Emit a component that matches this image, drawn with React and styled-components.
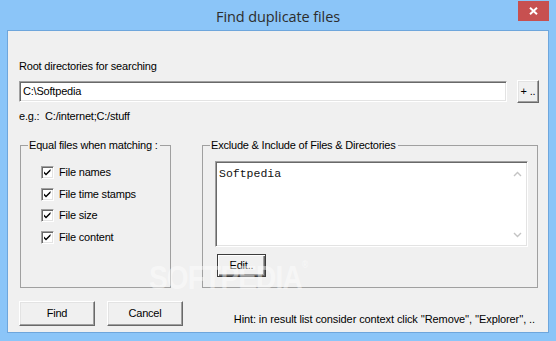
import React from "react";
import styled, { createGlobalStyle } from "styled-components";

const Global = createGlobalStyle`
  html, body { margin: 0; padding: 0; background: #8bc5f8; }
  #root { width: 556px; height: 341px; }
  * { box-sizing: border-box; }
`;

const Frame = styled.div`
  width: 556px;
  height: 341px;
  background: #8bc5f8;
  padding: 0 7px 8px 7px;
  display: flex;
  flex-direction: column;
  position: relative;
  overflow: hidden;
`;

const TitleBar = styled.div`
  height: 30px;
  display: grid;
  grid-template-columns: 1fr auto 1fr;
  align-items: start;
`;

const Title = styled.div`
  grid-column: 2;
  font-family: "Open Sans", "Noto Sans", sans-serif;
  font-size: 14.5px;
  line-height: 33px;
  color: #2d2d2d;
  letter-spacing: -0.1px;
`;

const CloseBtn = styled.div`
  grid-column: 3;
  justify-self: end;
  margin-top: 1px;
  width: 31px;
  height: 20px;
  background: #c75050;
  display: flex;
  align-items: center;
  justify-content: center;
`;

const Client = styled.div`
  flex: 1;
  background: #f0f0f0;
  border: 1px solid #6ea6dc;
  padding: 29px 9px 0 11px;
  display: flex;
  flex-direction: column;
  font-family: "Liberation Sans", Arial, sans-serif;
  font-size: 11px;
  letter-spacing: -0.2px;
  color: #000;
  position: relative;
`;

const Text = styled.div`
  line-height: 13px;
  height: 13px;
  white-space: pre;
  margin-top: ${(p) => p.$mt || 0}px;
`;

const InputRow = styled.div`
  display: flex;
  align-items: center;
  gap: 10px;
  margin-top: 7px;
  height: 23px;
`;

const Sunken = styled.div`
  background: #fff;
  border-top: 1px solid #a0a0a0;
  border-left: 1px solid #a0a0a0;
  border-right: 1px solid #fff;
  border-bottom: 1px solid #fff;
  box-shadow: inset 1px 1px 0 #696969, inset -1px -1px 0 #e3e3e3;
`;

const TextInput = styled(Sunken)`
  width: 488px;
  height: 21px;
  padding: 3px 3px;
  line-height: 13px;
  white-space: pre;
`;

const Button = styled.div`
  width: ${(p) => p.$w}px;
  height: ${(p) => p.$h}px;
  background: #f0f0f0;
  border-top: 1px solid #fff;
  border-left: 1px solid #fff;
  border-right: 1px solid #696969;
  border-bottom: 1px solid #696969;
  box-shadow: inset -1px -1px 0 #a0a0a0, inset 1px 1px 0 #e3e3e3;
  display: flex;
  align-items: center;
  justify-content: center;
  line-height: 13px;
  flex-shrink: 0;
  white-space: pre;
`;

const DefaultButton = styled(Button)`
  border: 1px solid #3c3c3c;
  box-shadow: inset 1px 1px 0 #fff, inset -1px -1px 0 #696969,
    inset -2px -2px 0 #a0a0a0;
`;

const Groups = styled.div`
  display: flex;
  margin-top: 22px;
  margin-left: 1px;
  gap: 31px;
`;

const Group = styled.div`
  position: relative;
  width: ${(p) => p.$w}px;
  height: 143px;
  border: 1px solid #a0a0a0;
  padding: ${(p) => p.$pad};
`;

const Caption = styled.div`
  position: absolute;
  top: -7px;
  left: 7px;
  padding: 0 2px 0 1px;
  background: #f0f0f0;
  line-height: 13px;
  white-space: pre;
`;

const CheckList = styled.div`
  display: flex;
  flex-direction: column;
  gap: 8.6px;
`;

const CheckRow = styled.div`
  display: flex;
  align-items: center;
  gap: 5px;
  height: 13px;
  line-height: 13px;
`;

const CheckBox = styled(Sunken)`
  width: 13px;
  height: 13px;
  position: relative;
  flex-shrink: 0;
  display: flex;
  align-items: center;
  justify-content: center;
`;

const TextArea = styled(Sunken)`
  width: 313px;
  height: 86px;
  display: flex;
`;

const AreaText = styled.div`
  flex: 1;
  padding: 5px 3px;
  font-family: "Liberation Mono", "Courier New", monospace;
  font-size: 11.5px;
  letter-spacing: 0;
  line-height: 13px;
  color: #111;
`;

const ScrollCol = styled.div`
  width: 17px;
  margin: 2px 1px 2px 0;
  display: flex;
  flex-direction: column;
  justify-content: space-between;
  align-items: center;
  padding: 7px 0 6px;
`;

const EditWrap = styled.div`
  margin: 7px 0 0 2px;
`;

const BottomRow = styled.div`
  display: flex;
  align-items: flex-end;
  margin-top: 13px;
  gap: 12px;
`;

const Hint = styled.div`
  margin-left: auto;
  margin-right: 4px;
  line-height: 13px;
  white-space: pre;
  letter-spacing: -0.1px;
`;

const Watermark = styled.div`
  position: absolute;
  left: 141px;
  top: 228px;
  font-family: "Liberation Sans", Arial, sans-serif;
  font-weight: bold;
  font-size: 33px;
  letter-spacing: -1px;
  color: rgba(255, 255, 255, 0.45);
  transform: scaleX(0.85);
  transform-origin: left top;
  pointer-events: none;
  & sup {
    font-size: 10px;
    vertical-align: top;
    letter-spacing: 0;
  }
`;

const Check = () => (
  <svg width="9" height="9" viewBox="0 0 9 9">
    <path d="M1 3.5 L3 5.5 L7.5 1 L7.5 3 L3 7.5 L1 5.5 Z" fill="#000" />
  </svg>
);

const Chevron = ({ up }) => (
  <svg width="9" height="6" viewBox="0 0 9 6">
    <polyline
      points={up ? "1,5 4.5,1.5 8,5" : "1,1 4.5,4.5 8,1"}
      fill="none"
      stroke="#c4c4c4"
      strokeWidth="1.4"
    />
  </svg>
);

const items = ["File names", "File time stamps", "File size", "File content"];

export default function App() {
  return (
    <>
      <Global />
      <Frame>
        <TitleBar>
          <Title>Find duplicate files</Title>
          <CloseBtn>
            <svg width="9" height="8" viewBox="0 0 9 8">
              <path d="M1 0.8 L8 7.2 M8 0.8 L1 7.2" stroke="#fff" strokeWidth="2" />
            </svg>
          </CloseBtn>
        </TitleBar>
        <Client>
          <Text>Root directories for searching</Text>
          <InputRow>
            <TextInput>C:\Softpedia</TextInput>
            <Button $w={22} $h={23}>+ ..</Button>
          </InputRow>
          <Text $mt={7}>e.g.:  C:/internet;C:/stuff</Text>
          <Groups>
            <Group $w={151} $pad="20px 0 0 20px">
              <Caption>Equal files when matching :</Caption>
              <CheckList>
                {items.map((t) => (
                  <CheckRow key={t}>
                    <CheckBox>
                      <Check />
                    </CheckBox>
                    {t}
                  </CheckRow>
                ))}
              </CheckList>
            </Group>
            <Group $w={336} $pad="15px 0 0 12px">
              <Caption>Exclude &amp; Include of Files &amp; Directories</Caption>
              <TextArea>
                <AreaText>Softpedia</AreaText>
                <ScrollCol>
                  <Chevron up />
                  <Chevron />
                </ScrollCol>
              </TextArea>
              <EditWrap>
                <DefaultButton $w={49} $h={23}>Edit..</DefaultButton>
              </EditWrap>
            </Group>
          </Groups>
          <BottomRow>
            <Button $w={76} $h={25}>Find</Button>
            <Button $w={76} $h={25}>Cancel</Button>
            <Hint>Hint: in result list consider context click ''Remove'', ''Explorer'', ..</Hint>
          </BottomRow>
          <Watermark>
            SOFTPEDIA<sup>®</sup>
          </Watermark>
        </Client>
      </Frame>
    </>
  );
}
